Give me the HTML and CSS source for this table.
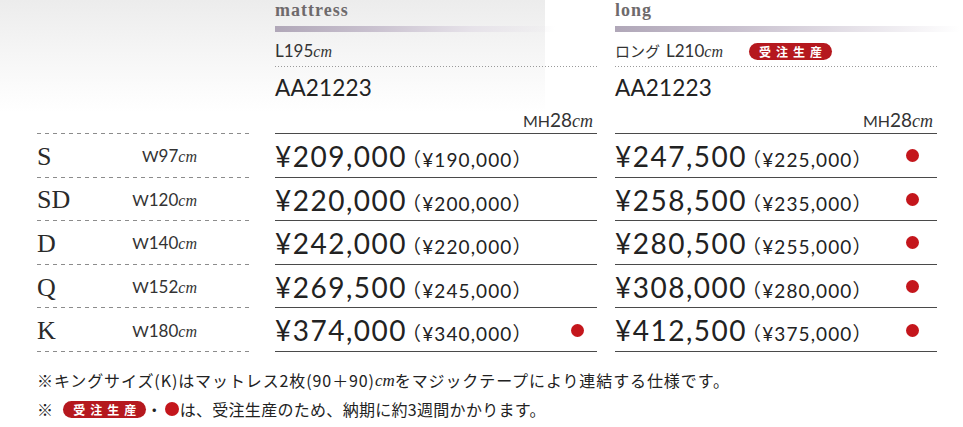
FILE: index.html
```html
<!DOCTYPE html>
<html lang="ja">
<head>
<meta charset="utf-8">
<title>mattress price</title>
<link rel="stylesheet" href="styles.css">
</head>
<body>
<div class="page">
  <div class="table">
    <div class="lc head-left"></div>
    <div class="mc head">
      <div class="title">mattress</div>
      <div class="bar"></div>
      <div class="sub"><span class="num">L195</span><span class="cm">cm</span></div>
      <div class="dots"></div>
      <div class="model">AA21223</div>
      <div class="mh"><span class="sc">MH</span><span class="num">28</span><span class="cm">cm</span></div>
    </div>
    <div class="rc head">
      <div class="title">long</div>
      <div class="bar bar-long"></div>
      <div class="sub"><span class="kana">ロング</span><span class="num">L210</span><span class="cm">cm</span><span class="badge">受注生産</span></div>
      <div class="dots"></div>
      <div class="model">AA21223</div>
      <div class="mh"><span class="sc">MH</span><span class="num">28</span><span class="cm">cm</span></div>
    </div>

    <div class="lc"><span class="size">S</span><span class="w"><span class="sc">W</span><span class="num">97</span><span class="cm">cm</span></span></div>
    <div class="mc row"><span class="price">¥209,000</span><span class="tax">（¥190,000）</span></div>
    <div class="rc row"><span class="price">¥247,500</span><span class="tax">（¥225,000）</span><span class="dot"></span></div>

    <div class="lc"><span class="size">SD</span><span class="w"><span class="sc">W</span><span class="num">120</span><span class="cm">cm</span></span></div>
    <div class="mc row"><span class="price">¥220,000</span><span class="tax">（¥200,000）</span></div>
    <div class="rc row"><span class="price">¥258,500</span><span class="tax">（¥235,000）</span><span class="dot"></span></div>

    <div class="lc"><span class="size">D</span><span class="w"><span class="sc">W</span><span class="num">140</span><span class="cm">cm</span></span></div>
    <div class="mc row"><span class="price">¥242,000</span><span class="tax">（¥220,000）</span></div>
    <div class="rc row"><span class="price">¥280,500</span><span class="tax">（¥255,000）</span><span class="dot"></span></div>

    <div class="lc"><span class="size">Q</span><span class="w"><span class="sc">W</span><span class="num">152</span><span class="cm">cm</span></span></div>
    <div class="mc row"><span class="price">¥269,500</span><span class="tax">（¥245,000）</span></div>
    <div class="rc row"><span class="price">¥308,000</span><span class="tax">（¥280,000）</span><span class="dot"></span></div>

    <div class="lc"><span class="size">K</span><span class="w"><span class="sc">W</span><span class="num">180</span><span class="cm">cm</span></span></div>
    <div class="mc row"><span class="price">¥374,000</span><span class="tax">（¥340,000）</span><span class="dot"></span></div>
    <div class="rc row"><span class="price">¥412,500</span><span class="tax">（¥375,000）</span><span class="dot"></span></div>
  </div>

  <div class="notes">
    <p class="note note-1">※キングサイズ(K)はマットレス2枚(90＋90)<span class="cm">cm</span>をマジックテープにより連結する仕様です。</p>
    <p class="note note-2">※<span class="badge note-badge">受注生産</span>・<span class="dot dot-inline"></span>は、受注生産のため、納期に約3週間かかります。</p>
  </div>
</div>
</body>
</html>
```

FILE: styles.css
```css
* { box-sizing: border-box; }

html, body {
  margin: 0;
  padding: 0;
  background: #fff;
}

body {
  font-family: "Lato", "Noto Sans CJK JP", sans-serif;
  color: #231f20;
}

.page {
  width: 963px;
  height: 427px;
  overflow: hidden;
  padding-left: 37px;
  background-image: linear-gradient(to bottom, #ececec 0%, #f6f6f6 50%, rgba(255,255,255,0) 100%);
  background-size: 545px 112px;
  background-repeat: no-repeat;
}

.table {
  display: grid;
  grid-template-columns: 215px 23px 322px 18px 322px;
  grid-template-rows: 134px repeat(5, 43.6px);
}

.lc { grid-column: 1; }
.mc { grid-column: 3; }
.rc { grid-column: 5; }

/* left column */
.lc {
  display: flex;
  align-items: center;
  padding-right: 55px;
  background-image: repeating-linear-gradient(to right, #8c8c8c 0 4px, transparent 4px 8px);
  background-size: 100% 1px;
  background-position: left bottom;
  background-repeat: no-repeat;
}

.size {
  flex: 1;
  font-family: "Liberation Serif", serif;
  font-size: 26px;
  color: #2a2a2a;
  line-height: 1;
  margin-top: 2px;
}

.w {
  display: flex;
  align-items: baseline;
  color: #333;
}

.sc { font-size: 15px; }
.w .sc { font-size: 16px; }
.num { font-size: 17px; }

.cm {
  font-family: "Liberation Serif", serif;
  font-style: italic;
  font-size: 16px;
}

/* header cells */
.head {
  display: flex;
  flex-direction: column;
  border-bottom: 1px solid #4a4a4a;
}

.title {
  height: 20px;
  line-height: 20px;
  font-family: "Liberation Serif", serif;
  font-weight: bold;
  font-size: 18px;
  letter-spacing: 1px;
  color: #6e6a6c;
}

.bar {
  margin-top: 6px;
  height: 6px;
  width: 280px;
  background: linear-gradient(to right, #b0a7b8 0%, #c9c1cf 35%, #e6e2e9 70%, rgba(255,255,255,0) 100%);
}

.bar-long {
  width: 345px;
}

.sub {
  margin-top: 8px;
  height: 22px;
  display: flex;
  align-items: baseline;
  line-height: 22px;
  color: #333;
}

.kana {
  font-family: "Noto Sans CJK JP", sans-serif;
  font-size: 15px;
  margin-right: 6px;
}

.badge {
  display: inline-block;
  font-family: "Noto Sans CJK JP", sans-serif;
  background: #b5181e;
  color: #fff;
  font-size: 12px;
  line-height: 17px;
  height: 17px;
  letter-spacing: 5px;
  padding: 0 5px 0 10px;
  border-radius: 9px;
  font-weight: bold;
}

.sub .badge {
  margin-left: 26px;
  align-self: center;
}

.dots {
  margin-top: 4px;
  height: 1px;
  background-image: repeating-linear-gradient(to right, #9a9a9a 0 1px, transparent 1px 3px);
}

.model {
  margin-top: 6px;
  height: 30px;
  line-height: 30px;
  font-size: 22.5px;
  letter-spacing: 0.2px;
  color: #222;
}

.mh {
  margin-top: 6px;
  height: 22px;
  display: flex;
  justify-content: flex-end;
  align-items: baseline;
  line-height: 22px;
  color: #333;
  padding-right: 4px;
}

.mh .num { font-size: 19px; }
.mh .sc { font-size: 16px; }
.mh .cm { font-size: 18px; }

/* price rows */
.row {
  display: flex;
  align-items: baseline;
  border-bottom: 1px solid #4a4a4a;
  padding-top: 5px;
}

.price {
  font-size: 28px;
  letter-spacing: 1.5px;
  line-height: 34px;
  color: #222;
}

.tax {
  font-size: 19px;
  letter-spacing: 1.1px;
  color: #222;
  margin-left: -5px;
}

.dot {
  display: inline-block;
  width: 13px;
  height: 13px;
  border-radius: 50%;
  background: #c4161c;
  align-self: center;
  margin-left: auto;
  margin-top: -4px;
}

.mc .dot { margin-right: 13px; }
.rc .dot { margin-right: 18px; }

/* notes */
.notes {
  margin-top: 14px;
}

.note {
  margin: 0;
  height: 29px;
  line-height: 29px;
  font-family: "Noto Sans CJK JP", sans-serif;
  font-size: 16px;
  color: #222;
  display: flex;
  align-items: center;
}

.note-1 { letter-spacing: 0.9px; }
.note-2 { letter-spacing: 0.3px; }

.note .cm {
  font-size: 17px;
  letter-spacing: 0;
}

.note-badge {
  margin-left: 10px;
  line-height: 17px;
  letter-spacing: 5px;
}

.dot-inline {
  margin: 0 1px 0 2px;
  width: 14px;
  height: 14px;
  align-self: center;
}
```
